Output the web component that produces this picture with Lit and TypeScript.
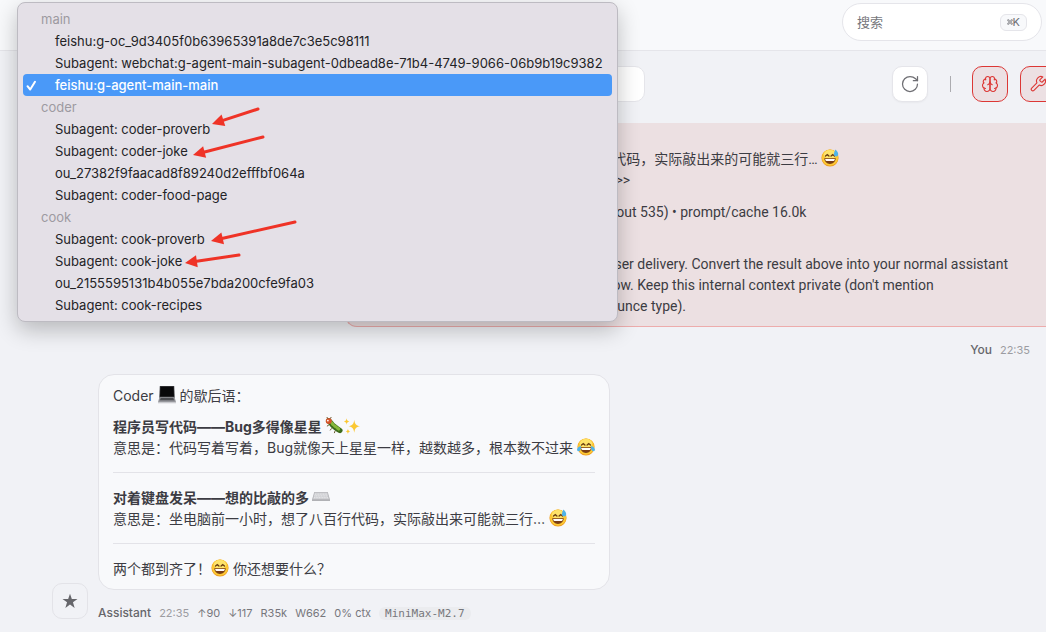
import { LitElement, html, css, svg } from "lit";
import { customElement, state } from "lit/decorators.js";

type EmojiName = "laptop" | "bug" | "sparkles" | "joy" | "keyboard" | "sweat" | "grin";

const face = svg`
  <circle cx="10" cy="10" r="9.500" fill="#ee9a1f"></circle>
  <circle cx="10" cy="9.500" r="9" fill="#fcc934"></circle>
  <ellipse cx="10" cy="6.200" rx="7" ry="5" fill="#fee36a"></ellipse>`;
const squintEyes = svg`
  <path d="M5 7.800 7 6.300l1.800 1.500M11.200 7.800l1.800-1.500 2 1.500" fill="none" stroke="#6b3f12" stroke-width="1.500" stroke-linecap="round"></path>`;
const smile = svg`
  <path d="M3.600 10.400h12.800c-.3 3.900-2.900 6.200-6.400 6.200s-6.100-2.300-6.400-6.200z" fill="#7a3d14"></path>
  <path d="M4.600 11h10.800c-.2 1.300-.7 2-1.400 2.400H6c-.7-.4-1.200-1.100-1.400-2.400z" fill="#fff"></path>`;

const emojiArt: Record<EmojiName, { label: string; art: unknown }> = {
  laptop: {
    label: "💻",
    art: svg`
      <path d="M2 0h16l.6 13H1.400z" fill="#3a3a3e"></path>
      <path d="M2.800 .8h14.400l.5 10.800H2.300z" fill="#08080a"></path>
      <path d="M1.600 12.600h16.800L20 18H0z" fill="#8d8e93"></path>
      <path d="M3 13.200h14l.9 2.600H2.100z" fill="#4b4c51"></path>
      <path d="M0 17.600h20v1.600H0z" fill="#c9cace"></path>`,
  },
  bug: {
    label: "🐛",
    art: svg`
      <path d="M4 4.500c2.500 1 3 3.500 5 5s4 3.500 7.500 5.500" fill="none" stroke="#3c6b1c" stroke-width="6" stroke-linecap="round"></path>
      <path d="M5 4.500c2.500 1 3 3.500 5 5s4 3 6.500 5" fill="none" stroke="#86b83a" stroke-width="3.500" stroke-linecap="round" stroke-dasharray="1.500 2.600"></path>
      <circle cx="4.200" cy="4.400" r="3.300" fill="#d6552b"></circle>
      <circle cx="3.200" cy="4" r="1" fill="#fff"></circle>
      <path d="M3 1.500 2 0M6 1.500 7 0M4 9l-1.500 1M7 13l-1 1.500M11 16l-.5 1.500" stroke="#5b4a1c" stroke-width="1" stroke-linecap="round"></path>`,
  },
  sparkles: {
    label: "✨",
    art: svg`
      <path d="M12.500 3c.7 4.800 1.800 6.400 6.500 7.300-4.700.9-5.800 2.500-6.500 7.300-.7-4.800-1.800-6.400-6.500-7.300 4.700-.9 5.800-2.500 6.500-7.300z" fill="#fbc832"></path>
      <path d="M4 1.500c.4 2.300.9 3 3 3.500-2.100.5-2.600 1.200-3 3.500C3.600 6.200 3.100 5.500 1 5c2.100-.5 2.600-1.200 3-3.500zM5.500 13c.3 1.900.8 2.600 2.500 3-1.700.4-2.200 1.100-2.500 3-.3-1.900-.8-2.600-2.500-3 1.700-.4 2.200-1.100 2.500-3z" fill="#fbc832"></path>`,
  },
  joy: {
    label: "😂",
    art: svg`${face}${squintEyes}${smile}
      <path d="M4.600 8.800C2 9.300-.2 11.200.1 13.300c.3 1.800 2.700 2 3.500.4.600-1.200.7-3 1-4.900zM15.400 8.800c2.600.5 4.800 2.400 4.500 4.500-.3 1.800-2.700 2-3.500.4-.6-1.200-.7-3-1-4.900z" fill="#4fb3e8"></path>`,
  },
  keyboard: {
    label: "⌨️",
    art: svg`
      <path d="M2.500 4.500h15L20 13v1.500H0V13z" fill="#b0b1b5"></path>
      <path d="M3 5h14l2 7.500H1z" fill="#cdced1"></path>
      <path d="M3.200 6.800h13.600M2.700 8.800h14.600M2.200 10.800h15.600" stroke="#ececef" stroke-width="1" stroke-dasharray="1.300 .5"></path>`,
  },
  sweat: {
    label: "😅",
    art: svg`${face}${squintEyes}${smile}
      <path d="M16 .6c2.100 2 3.300 3.900 3.100 5.600-.2 1.500-1.400 2.300-2.700 2.100-1.400-.2-2.300-1.400-2.100-2.900.2-1.600.9-3.200 1.700-4.800z" fill="#4fb3e8"></path>`,
  },
  grin: { label: "😄", art: svg`${face}${squintEyes}${smile}` },
};

const emoji = (name: EmojiName) =>
  html`<svg class="emoji" viewBox="0 0 20 20" role="img" aria-label=${emojiArt[name].label}>${emojiArt[name].art}</svg>`;

interface SessionGroup {
  agent: string;
  sessions: string[];
}

const groups: SessionGroup[] = [
  {
    agent: "main",
    sessions: [
      "feishu:g-oc_9d3405f0b63965391a8de7c3e5c98111",
      "Subagent: webchat:g-agent-main-subagent-0dbead8e-71b4-4749-9066-06b9b19c9382",
      "feishu:g-agent-main-main",
    ],
  },
  {
    agent: "coder",
    sessions: [
      "Subagent: coder-proverb",
      "Subagent: coder-joke",
      "ou_27382f9faacad8f89240d2efffbf064a",
      "Subagent: coder-food-page",
    ],
  },
  {
    agent: "cook",
    sessions: [
      "Subagent: cook-proverb",
      "Subagent: cook-joke",
      "ou_2155595131b4b055e7bda200cfe9fa03",
      "Subagent: cook-recipes",
    ],
  },
];

@customElement("app-root")
export class AppRoot extends LitElement {
  @state() private current = "feishu:g-agent-main-main";

  static styles = css`
    :host {
      display: block;
      position: relative;
      min-height: 100vh;
      overflow: hidden;
      background: #f1f2f6;
      color: #3c3c43;
      font-family: Inter, "Noto Sans CJK SC", sans-serif;
      font-size: 14px;
      line-height: 21px;
    }
    * {
      box-sizing: border-box;
    }
    button,
    input,
    select {
      font: inherit;
      color: inherit;
      margin: 0;
    }
    p {
      margin: 0;
    }
    .topbar {
      display: flex;
      justify-content: flex-end;
      align-items: flex-start;
      height: 51px;
      padding: 3px 4px 0;
      background: #f8f9fb;
      border-bottom: 1px solid #e5e5ea;
    }
    .search {
      display: flex;
      align-items: center;
      width: 200px;
      height: 38px;
      padding: 0 14px;
      background: #fff;
      border: 1px solid #e5e5ea;
      border-radius: 19px;
    }
    .search input {
      flex: 1;
      min-width: 0;
      padding: 0;
      border: 0;
      outline: 0;
      background: none;
      font-size: 13px;
    }
    .search input::placeholder {
      color: #77777c;
      opacity: 1;
    }
    kbd {
      display: flex;
      align-items: center;
      height: 17px;
      padding: 0 6px;
      border: 1px solid #e5e5ea;
      border-radius: 6px;
      background: #f8f9fb;
      color: #6e6e73;
      font-family: inherit;
      font-size: 11px;
    }
    kbd svg {
      width: 6px;
      height: 6px;
    }
    .toolbar {
      display: flex;
      align-items: center;
      gap: 12px;
      padding: 15px 0 21px 28px;
      margin-right: -10px;
    }
    .session {
      appearance: none;
      flex: none;
      width: 60%;
      height: 36px;
      padding: 0 12px;
      border: 1px solid #e5e5ea;
      border-radius: 10px;
      background: #fff;
      font-size: 13px;
    }
    .spacer {
      flex: 1;
    }
    .tool {
      display: grid;
      place-items: center;
      flex: none;
      width: 36px;
      height: 36px;
      padding: 0;
      border: 1px solid #e5e5ea;
      border-radius: 10px;
      background: #fff;
      color: #6e6e73;
      box-shadow: 0 1px 2px rgba(0, 0, 0, 0.04);
    }
    .tool.on {
      border-color: #dc3735;
      background: #ece0e3;
      color: #dc3735;
      box-shadow: none;
    }
    .icon {
      width: 18px;
      height: 18px;
      fill: none;
      stroke: currentColor;
      stroke-width: 1.5;
      stroke-linecap: round;
      stroke-linejoin: round;
    }
    .icon.large {
      width: 20px;
      height: 20px;
    }
    .divider {
      flex: none;
      width: 1px;
      height: 16px;
      margin: 0 9px 0 10px;
      background: #acacb0;
    }
    .emoji {
      width: 18px;
      height: 18px;
      vertical-align: -3px;
    }
    .thread {
      display: flex;
      flex-direction: column;
    }
    .user-bubble {
      margin-left: 33%;
      padding: 26px 14px 9px;
      border: solid #edacac;
      border-width: 0 0 1px 1px;
      border-radius: 0 0 0 12px;
      background: #ece0e2;
      font-family: Roboto, "Noto Sans CJK SC", sans-serif;
    }
    .user-bubble p + p {
      margin-top: 11px;
    }
    .user-bubble p:last-child {
      margin-top: 10px;
    }
    .meta {
      display: flex;
      align-items: center;
      gap: 8px;
      color: #77777c;
      font-size: 11px;
      line-height: 16px;
    }
    .meta b {
      color: #66666b;
      font-size: 12px;
      font-weight: 500;
    }
    .meta time {
      color: #9c9ca1;
    }
    .user-meta {
      justify-content: flex-end;
      padding: 15px 16px 16px;
    }
    .reply {
      display: flex;
      align-items: flex-end;
      gap: 10px;
      padding: 0 52px;
    }
    .avatar {
      display: grid;
      place-items: center;
      flex: none;
      width: 36px;
      height: 36px;
      margin-bottom: 2px;
      border: 1px solid #e3e3e8;
      border-radius: 10px;
      color: #66666b;
    }
    .avatar svg {
      width: 16px;
      height: 16px;
    }
    .bubble {
      width: fit-content;
      padding: 10px 14px;
      border: 1px solid #e3e3e8;
      border-radius: 16px;
      background: #f8f9fb;
    }
    .bubble p + p {
      margin-top: 10px;
    }
    .bubble hr {
      height: 1px;
      margin: 14px 0;
      border: 0;
      background: #e3e3e8;
    }
    .reply .meta {
      margin-top: 15px;
    }
    .meta code {
      padding: 0 6px;
      border-radius: 6px;
      background: #ebecef;
      font-family: "DejaVu Sans Mono", monospace;
      font-size: 11px;
      line-height: 13px;
    }
    .menu {
      position: absolute;
      top: 2px;
      left: 17px;
      width: 601px;
      padding: 5px;
      border: 1px solid #bdbbc2;
      border-radius: 8px;
      background: #e4e0e7;
      box-shadow: 0 8px 22px rgba(0, 0, 0, 0.24);
      color: #232326;
      font-size: 13px;
      line-height: 22px;
    }
    .group-name {
      padding-left: 18px;
      color: #9d9aa1;
    }
    .choice {
      display: flex;
      align-items: center;
      width: 100%;
      height: 22px;
      padding: 0 0 0 3px;
      border: 0;
      border-radius: 4px;
      background: none;
      text-align: left;
      white-space: nowrap;
    }
    .choice[aria-selected="true"] {
      background: #4a99f8;
      color: #fff;
      font-weight: 500;
    }
    .tick {
      flex: none;
      width: 11px;
      height: 11px;
      margin-right: 18px;
      fill: none;
      stroke: currentColor;
      stroke-width: 2;
      stroke-linecap: round;
      stroke-linejoin: round;
    }
    .notes {
      position: absolute;
      top: 0;
      left: 0;
      width: 330px;
      height: 320px;
      pointer-events: none;
      stroke: #ef3327;
      stroke-width: 3;
      stroke-linecap: round;
      fill: #ef3327;
    }
  `;

  private renderMenu() {
    return html`
      <div class="menu" role="listbox" aria-label="Session">
        ${groups.map(
          (group) => html`
            <div role="group" aria-label=${group.agent}>
              <div class="group-name">${group.agent}</div>
              ${group.sessions.map(
                (name) => html`
                  <button
                    class="choice"
                    role="option"
                    aria-selected=${name === this.current ? "true" : "false"}
                    @click=${() => (this.current = name)}
                  >
                    <svg class="tick" viewBox="0 0 11 11" aria-hidden="true">
                      ${name === this.current ? svg`<path d="M1.500 6.200 4.200 9.500 9 1.800"></path>` : null}
                    </svg>
                    ${name}
                  </button>
                `,
              )}
            </div>
          `,
        )}
      </div>
    `;
  }

  private renderNotes() {
    const arrows = [
      { x1: 258, y1: 109, x2: 212, y2: 124 },
      { x1: 263, y1: 137, x2: 193, y2: 155 },
      { x1: 295, y1: 222, x2: 211, y2: 241 },
      { x1: 239, y1: 255, x2: 185, y2: 263 },
    ];
    return html`
      <svg class="notes" viewBox="0 0 330 320" aria-hidden="true">
        ${arrows.map(({ x1, y1, x2, y2 }) => {
          const angle = (Math.atan2(y1 - y2, x1 - x2) * 180) / Math.PI;
          const length = Math.hypot(x2 - x1, y2 - y1);
          return svg`<g transform="translate(${x2} ${y2}) rotate(${angle})">
            <path d="M${length} 0H10"></path>
            <path d="M0 0 12-6V6z" stroke="none"></path>
          </g>`;
        })}
      </svg>
    `;
  }

  render() {
    return html`
      <header class="topbar">
        <label class="search">
          <input type="text" placeholder="搜索" aria-label="搜索" />
          <kbd>
            <svg viewBox="0 0 12 12" fill="none" stroke="currentColor" stroke-width="1.300" aria-hidden="true">
              <path d="M4 4h4v4H4zM4 4H2.500A1.500 1.500 0 1 1 4 2.500zM8 4V2.500A1.500 1.500 0 1 1 9.500 4zM8 8h1.500A1.500 1.500 0 1 1 8 9.500zM4 8v1.500A1.500 1.500 0 1 1 2.500 8z"></path>
            </svg>K
          </kbd>
        </label>
      </header>

      <div class="toolbar">
        <select class="session" aria-label="Session">
          ${groups.map(
            (group) => html`<optgroup label=${group.agent}>
              ${group.sessions.map((name) => html`<option ?selected=${name === this.current}>${name}</option>`)}
            </optgroup>`,
          )}
        </select>
        <span class="spacer"></span>
        <button class="tool" aria-label="Refresh">
          <svg class="icon large" viewBox="0 0 24 24">
            <path d="M21 12a9 9 0 1 1-9-9c2.520 0 4.930 1 6.740 2.740L21 8"></path>
            <path d="M21 3v5h-5"></path>
          </svg>
        </button>
        <span class="divider"></span>
        <button class="tool on" aria-label="Thinking" aria-pressed="true">
          <svg class="icon" viewBox="0 0 24 24">
            <path d="M12 5a3 3 0 1 0-5.997.125 4 4 0 0 0-2.526 5.770 4 4 0 0 0 .556 6.588A4 4 0 1 0 12 18Z"></path>
            <path d="M12 5a3 3 0 1 1 5.997.125 4 4 0 0 1 2.526 5.770 4 4 0 0 1-.556 6.588A4 4 0 1 1 12 18Z"></path>
            <path d="M15 13a4.500 4.500 0 0 1-3-4 4.500 4.500 0 0 1-3 4"></path>
            <path d="M17.599 6.500a3 3 0 0 0 .399-1.375M6.003 5.125A3 3 0 0 0 6.401 6.500M3.477 10.896a4 4 0 0 1 .585-.396M19.938 10.500a4 4 0 0 1 .585.396M6 18a4 4 0 0 1-1.967-.516M19.967 17.484A4 4 0 0 1 18 18"></path>
          </svg>
        </button>
        <button class="tool on" aria-label="Tools" aria-pressed="true">
          <svg class="icon" viewBox="0 0 24 24">
            <path d="M14.700 6.300a1 1 0 0 0 0 1.400l1.600 1.600a1 1 0 0 0 1.400 0l3.770-3.770a6 6 0 0 1-7.940 7.940l-6.910 6.910a2.120 2.120 0 0 1-3-3l6.910-6.910a6 6 0 0 1 7.940-7.940l-3.760 3.760z"></path>
          </svg>
        </button>
      </div>

      <main class="thread">
        <article>
          <div class="user-bubble">
            <p>
              意思是：坐在电脑前一小时，想了八百行代码，实际敲出来的可能就三行… ${emoji("sweat")}<br />
              &lt;&lt;&lt;END_UNTRUSTED_CHILD_RESULT_1&gt;&gt;&gt;
            </p>
            <p>Stats: runtime 14s • tokens 16.5k (in 16 / out 535) • prompt/cache 16.0k</p>
            <p>
              Action:<br />
              A completed subagent task is ready for user delivery. Convert the result above into your normal assistant
              voice and send that user-facing update now. Keep this internal context private (don't mention
              system/log/stats/session details or announce type).
            </p>
          </div>
          <div class="meta user-meta"><b>You</b><time>22:35</time></div>
        </article>

        <article class="reply">
          <div class="avatar">
            <svg viewBox="0 0 20 20" fill="currentColor" role="img" aria-label="Assistant">
              <path d="M10 .8l2.300 6.700h7.100l-5.700 4.200 2.100 6.900L10 14.500l-5.800 4.100 2.100-6.900L.6 7.500h7.100z"></path>
            </svg>
          </div>
          <div>
            <div class="bubble">
              <p>Coder ${emoji("laptop")} 的歇后语：</p>
              <p>
                <strong>程序员写代码——Bug多得像星星 ${emoji("bug")}${emoji("sparkles")}</strong><br />
                意思是：代码写着写着，Bug就像天上星星一样，越数越多，根本数不过来 ${emoji("joy")}
              </p>
              <hr />
              <p>
                <strong>对着键盘发呆——想的比敲的多 ${emoji("keyboard")}</strong><br />
                意思是：坐电脑前一小时，想了八百行代码，实际敲出来可能就三行… ${emoji("sweat")}
              </p>
              <hr />
              <p>两个都到齐了！${emoji("grin")} 你还想要什么？</p>
            </div>
            <div class="meta">
              <b>Assistant</b><time>22:35</time><span>↑90</span><span>↓117</span><span>R35k</span><span>W662</span
              ><span>0% ctx</span><code>MiniMax-M2.7</code>
            </div>
          </div>
        </article>
      </main>

      ${this.renderMenu()} ${this.renderNotes()}
    `;
  }
}
